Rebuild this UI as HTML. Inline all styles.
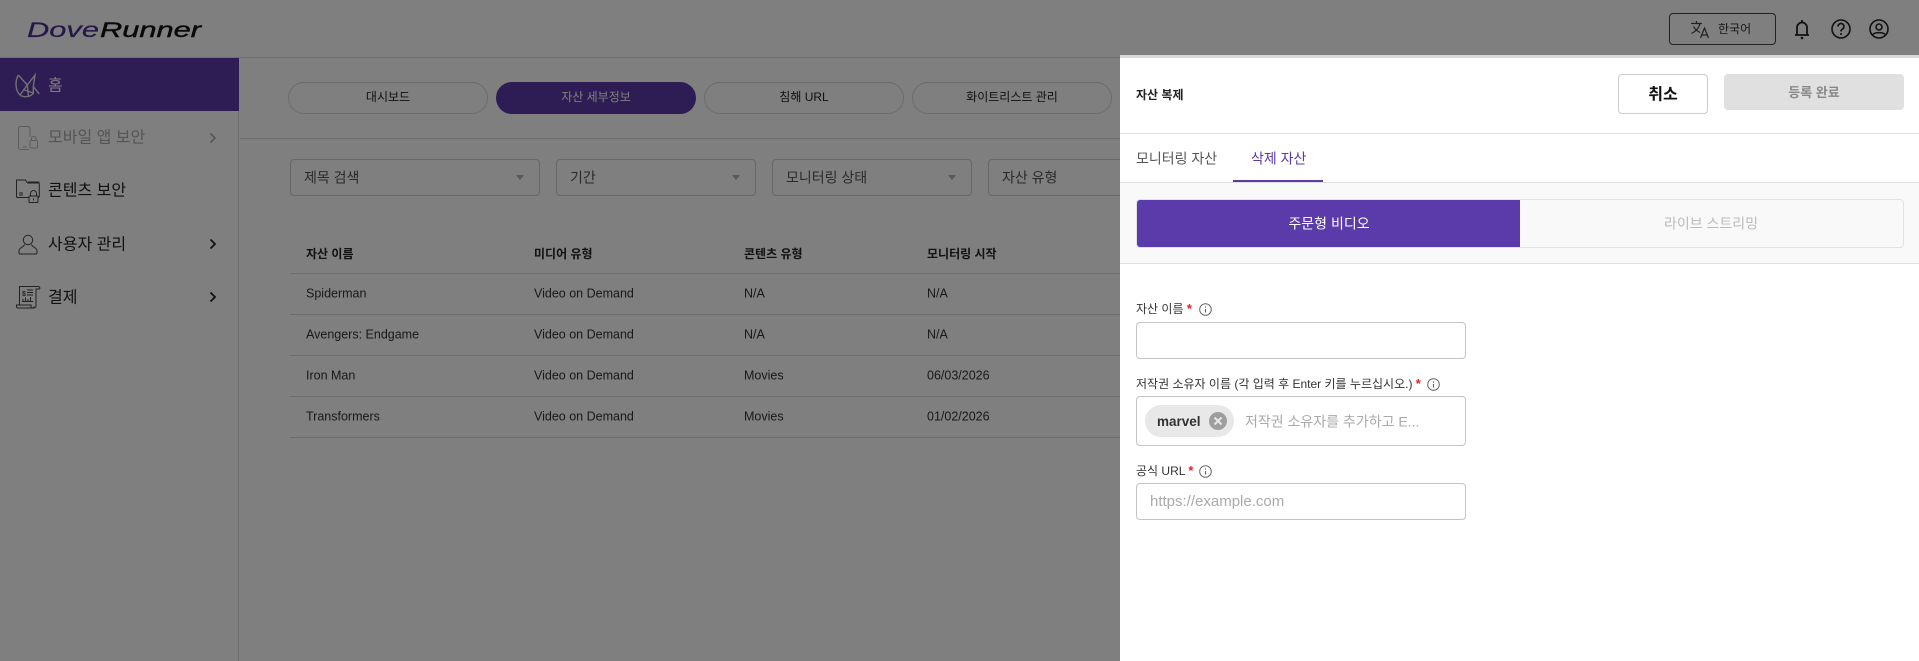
<!DOCTYPE html>
<html lang="ko"><head><meta charset="utf-8"><title>DoveRunner</title>
<style>
*{box-sizing:border-box}
html,body{margin:0;padding:0;width:1919px;height:661px;overflow:hidden;background:#fff;font-family:"Liberation Sans","Noto Sans CJK KR",sans-serif;color:#222}
#a{position:relative;width:1919px;height:661px;overflow:hidden}
.b{position:absolute}
.t{position:absolute;white-space:nowrap;transform:translateY(-50%);line-height:1.2}
.c{position:absolute;white-space:nowrap;transform:translate(-50%,-50%);line-height:1.2}
.pill{position:absolute;top:82px;width:200px;height:32px;border:1px solid #d8d8d8;border-radius:16px}
.sel{position:absolute;top:159px;height:37px;border:1px solid #cfcfcf;border-radius:4px}
.car{position:absolute;top:175px;width:0;height:0;border-left:4.500px solid transparent;border-right:4.500px solid transparent;border-top:5px solid #b0b0b0}
.ln{position:absolute;left:290px;width:830px;height:1px;background:#ddd}
.th{font-size:12px;font-weight:bold;color:#222}
.td{font-size:12.500px;color:#333}
.nav{font-size:16px;color:#222}
.inp{position:absolute;left:1136px;width:330px;border:1px solid #c4c4c4;border-radius:4px;background:#fff}
.lb{font-size:12px;color:#333}
.st{color:#e0202c;font-weight:bold;font-size:13px}
svg{position:absolute;overflow:visible}
</style></head><body><div id="a">

<!-- base page -->
<div class="b" style="left:0;top:57px;width:1919px;height:1px;background:#ddd"></div>
<svg style="left:24px;top:18px" width="180" height="26" viewBox="0 0 180 26"><text x="3" y="19" font-family="Liberation Sans" font-style="italic" font-size="21" fill="#4a2f90" stroke="#4a2f90" stroke-width=".2" textLength="72" lengthAdjust="spacingAndGlyphs">Dove</text><text x="76" y="19" font-family="Liberation Sans" font-style="italic" font-size="21" fill="#111" stroke="#111" stroke-width=".4" textLength="101" lengthAdjust="spacingAndGlyphs">Runner</text></svg>

<div class="b" style="left:0;top:58px;width:239px;height:603px;border-right:1px solid #ddd"></div>
<div class="b" style="left:0;top:58px;width:239px;height:53px;background:#5b3aa9"></div>
<svg style="left:15px;top:72px" width="26" height="26" viewBox="0 0 26 26" fill="none" stroke="#e2e2e2" stroke-width="1.400"><path d="M3.300 3 12.300 13 20 3 18.300 14.700 24.300 22"/><path d="M3.300 3C0 9 0 18 5 23C8 25.500 15 25.500 18.300 21.300L18.300 14.700"/><path d="M12.300 13 5 23M12.300 13 13.500 24.700M8 17.500 18.300 21"/></svg>
<div class="t nav" style="left:48px;top:86px;color:#fff">홈</div>

<svg style="left:17px;top:126px" width="22" height="25" viewBox="0 0 22 25" fill="none" stroke="#bbb" stroke-width="1"><path d="M12 23.500H3.500a2 2 0 0 1-2-2V2.500a2 2 0 0 1 2-2H11a2 2 0 0 1 2 2V11"/><path d="M6 21h4"/><rect x="13" y="14.500" width="7.500" height="7.500" rx="1.500"/><path d="M14.500 14.500v-2a2.300 2.300 0 0 1 4.600 0v2"/></svg>
<div class="t nav" style="left:48px;top:138px;color:#aaa">모바일 앱 보안</div>
<svg style="left:209px;top:132px" width="8" height="12" viewBox="0 0 8 12" fill="none" stroke="#aaa" stroke-width="1.600"><path d="M1.500 1.500 6 6l-4.500 4.500"/></svg>

<svg style="left:16px;top:179px" width="24" height="24" viewBox="0 0 24 24" fill="none" stroke="#444" stroke-width="1"><path d="M13 18.500H1.500a1 1 0 0 1-1-1V1h9l2 3h11a.8.8 0 0 1 .8.8V17a1.500 1.500 0 0 1-1.500 1.500H23"/><path d="M12 3h11.500"/><path d="M3 14h4M3 16h4"/><rect x="13" y="17" width="9" height="6.500" rx=".8"/><path d="M14.500 17v-2.500a3 3 0 0 1 6 0V17"/><path d="M17.500 19.500v2"/></svg>
<div class="t nav" style="left:48px;top:191px">콘텐츠 보안</div>

<svg style="left:18px;top:234px" width="20" height="21" viewBox="0 0 20 21" fill="none" stroke="#444" stroke-width="1"><circle cx="10" cy="6" r="4.700"/><path d="M6.500 10.500C6 13 1 13.500 1 17v2a1 1 0 0 0 1 1h16a1 1 0 0 0 1-1v-2c0-3.500-5-4-5.500-6.500"/></svg>
<div class="t nav" style="left:48px;top:245px">사용자 관리</div>
<svg style="left:209px;top:238px" width="8" height="12" viewBox="0 0 8 12" fill="none" stroke="#222" stroke-width="1.800"><path d="M1.500 1.500 6 6l-4.500 4.500"/></svg>

<svg style="left:16px;top:285px" width="24" height="24" viewBox="0 0 24 24" fill="none" stroke="#444" stroke-width="1"><path d="M20 3.500V21a2 2 0 0 1-2 2H2a1.500 1.500 0 0 1-1.500-1.500V20H15v1.500a1.500 1.500 0 0 0 3 0"/><path d="M3.500 20V1.500h19a1.500 1.500 0 0 1 1 2.500H20"/><path d="M11 5h6M11 7.500h6M11 10h6M6 16.500h11M7 16v-2M9.500 16v-3.500M12 16v-2M14.500 16v-4"/></svg>
<div class="b" style="left:22px;top:291px;font-size:7px;color:#444;line-height:8px;font-weight:bold">$</div>
<div class="t nav" style="left:48px;top:298px">결제</div>
<svg style="left:209px;top:291px" width="8" height="12" viewBox="0 0 8 12" fill="none" stroke="#222" stroke-width="1.800"><path d="M1.500 1.500 6 6l-4.500 4.500"/></svg>

<div class="pill" style="left:288px"></div><div class="c" style="left:388px;top:97px;font-size:12px">대시보드</div>
<div class="pill" style="left:496px;background:#5b3aa9;border-color:#5b3aa9"></div><div class="c" style="left:596px;top:97px;font-size:12px;color:#fff">자산 세부정보</div>
<div class="pill" style="left:704px"></div><div class="c" style="left:804px;top:97px;font-size:12px">침해 URL</div>
<div class="pill" style="left:912px"></div><div class="c" style="left:1012px;top:97px;font-size:12px">화이트리스트 관리</div>
<div class="b" style="left:240px;top:138px;width:880px;height:1px;background:#ddd"></div>

<div class="sel" style="left:290px;width:250px"></div><div class="t" style="left:304px;top:178px;font-size:14px;color:#555">제목 검색</div><div class="car" style="left:516px"></div>
<div class="sel" style="left:556px;width:200px"></div><div class="t" style="left:570px;top:178px;font-size:14px;color:#555">기간</div><div class="car" style="left:732px"></div>
<div class="sel" style="left:772px;width:200px"></div><div class="t" style="left:786px;top:178px;font-size:14px;color:#555">모니터링 상태</div><div class="car" style="left:948px"></div>
<div class="sel" style="left:988px;width:200px"></div><div class="t" style="left:1002px;top:178px;font-size:14px;color:#555">자산 유형</div>

<div class="t th" style="left:306px;top:254px">자산 이름</div><div class="t th" style="left:534px;top:254px">미디어 유형</div><div class="t th" style="left:744px;top:254px">콘텐츠 유형</div><div class="t th" style="left:927px;top:254px">모니터링 시작</div>
<div class="ln" style="top:273px"></div><div class="ln" style="top:314px"></div><div class="ln" style="top:355px"></div><div class="ln" style="top:396px"></div><div class="ln" style="top:437px"></div>

<div class="t td" style="left:306px;top:294px">Spiderman</div><div class="t td" style="left:534px;top:294px">Video on Demand</div><div class="t td" style="left:744px;top:294px">N/A</div><div class="t td" style="left:927px;top:294px">N/A</div>
<div class="t td" style="left:306px;top:335px">Avengers: Endgame</div><div class="t td" style="left:534px;top:335px">Video on Demand</div><div class="t td" style="left:744px;top:335px">N/A</div><div class="t td" style="left:927px;top:335px">N/A</div>
<div class="t td" style="left:306px;top:376px">Iron Man</div><div class="t td" style="left:534px;top:376px">Video on Demand</div><div class="t td" style="left:744px;top:376px">Movies</div><div class="t td" style="left:927px;top:376px">06/03/2026</div>
<div class="t td" style="left:306px;top:417px">Transformers</div><div class="t td" style="left:534px;top:417px">Video on Demand</div><div class="t td" style="left:744px;top:417px">Movies</div><div class="t td" style="left:927px;top:417px">01/02/2026</div>

<!-- top right -->
<div class="b" style="left:1669px;top:13px;width:107px;height:32px;border:1px solid #444;border-radius:4px"></div>
<svg style="left:1690px;top:20px" width="20" height="19" viewBox="0 0 20 19" fill="none" stroke="#444" stroke-width="1.200"><path d="M1 3.500h11M6.500 1v2.500M10 3.500C9 8 5.500 11.500 1.500 13.500M3.500 6.500C5 9.500 8 11.500 10 12.500"/><path d="M10.500 18 14.500 8l4 10M12 15h5"/></svg>
<div class="t" style="left:1718px;top:29px;font-size:12px;color:#333">한국어</div>
<svg style="left:1792px;top:18px" width="20" height="22" viewBox="0 0 20 22" fill="none" stroke="#222" stroke-width="1.800"><path d="M5 16.500V9.500a5 5 0 0 1 10 0v7M3 17h14"/><path d="M10 2v2"/><circle cx="10" cy="20" r="1.300" fill="#222" stroke="none"/></svg>
<svg style="left:1831px;top:19px" width="20" height="20" viewBox="0 0 20 20" fill="none" stroke="#222" stroke-width="1.600"><circle cx="10" cy="10" r="9"/><path d="M7 7.500a3 3 0 1 1 4.500 2.600c-1 .6-1.500 1-1.500 2.400"/><circle cx="10" cy="15" r="1" fill="#222" stroke="none"/></svg>
<svg style="left:1869px;top:19px" width="20" height="20" viewBox="0 0 20 20" fill="none" stroke="#222" stroke-width="1.600"><circle cx="10" cy="10" r="9"/><circle cx="10" cy="8" r="3"/><path d="M4 15.500c1.500-2.500 10.500-2.500 12 0"/></svg>

<!-- overlay -->
<div class="b" style="left:0;top:0;width:1919px;height:661px;background:rgba(0,0,0,.5)"></div>

<!-- panel -->
<div class="b" style="left:1120px;top:55px;width:799px;height:606px;background:#fff;border-top:3px solid #d8d8d8"></div>
<div class="t" style="left:1136px;top:95px;font-size:12px;font-weight:bold;color:#222">자산 복제</div>
<div class="b" style="left:1618px;top:74px;width:90px;height:40px;background:#fff;border:1px solid #ccc;border-radius:4px"></div>
<div class="c" style="left:1663px;top:95px;font-size:16px;font-weight:bold;color:#111">취소</div>
<div class="b" style="left:1724px;top:74px;width:180px;height:36px;background:#e0e0e0;border-radius:4px"></div>
<div class="c" style="left:1814px;top:93px;font-size:13px;font-weight:bold;color:#888">등록 완료</div>
<div class="b" style="left:1120px;top:133px;width:799px;height:1px;background:#ddd"></div>

<div class="t" style="left:1136px;top:159px;font-size:14px;color:#555">모니터링 자산</div>
<div class="t" style="left:1251px;top:159px;font-size:14px;color:#5b3aa9">삭제 자산</div>
<div class="b" style="left:1120px;top:182px;width:799px;height:82px;background:#f9f9f9;border-top:1px solid #ddd;border-bottom:1px solid #ddd"></div>
<div class="b" style="left:1233px;top:180px;width:90px;height:2px;background:#5b3aa9"></div>

<div class="b" style="left:1136px;top:199px;width:768px;height:49px;background:#f9f9f9;border:1px solid #e2e2e2;border-radius:4px"></div>
<div class="b" style="left:1137px;top:200px;width:383px;height:47px;background:#5b3aa9;border-radius:3px 0 0 3px"></div>
<div class="c" style="left:1329px;top:224px;font-size:14px;color:#fff">주문형 비디오</div>
<div class="c" style="left:1711px;top:224px;font-size:14px;color:#bbb">라이브 스트리밍</div>

<div class="t lb" style="left:1136px;top:309px">자산 이름 <span class="st">*</span></div>
<svg style="left:1199px;top:303px" width="13" height="13" viewBox="0 0 13 13" fill="none" stroke="#666"><circle cx="6.500" cy="6.500" r="5.800"/><path d="M6.500 6v3.500M6.500 3.500v1.200" stroke-width="1.200"/></svg>
<div class="inp" style="top:322px;height:37px"></div>

<div class="t lb" style="left:1136px;top:384px">저작권 소유자 이름 (각 입력 후 Enter 키를 누르십시오.) <span class="st">*</span></div>
<svg style="left:1427px;top:378px" width="13" height="13" viewBox="0 0 13 13" fill="none" stroke="#666"><circle cx="6.500" cy="6.500" r="5.800"/><path d="M6.500 6v3.500M6.500 3.500v1.200" stroke-width="1.200"/></svg>
<div class="inp" style="top:396px;height:50px"></div>
<div class="b" style="left:1145px;top:405px;width:89px;height:32px;background:#e8e8e8;border-radius:16px"></div>
<div class="t" style="left:1157px;top:422px;font-size:13.500px;font-weight:bold;color:#333">marvel</div>
<svg style="left:1209px;top:412px" width="18" height="18" viewBox="0 0 18 18"><circle cx="9" cy="9" r="9" fill="#9e9e9e"/><path d="M5.500 5.500l7 7M12.500 5.500l-7 7" stroke="#e8e8e8" stroke-width="2"/></svg>
<div class="t" style="left:1245px;top:422px;font-size:14px;color:#aaa">저작권 소유자를 추가하고 E...</div>

<div class="t lb" style="left:1136px;top:471px">공식 URL <span class="st">*</span></div>
<svg style="left:1199px;top:465px" width="13" height="13" viewBox="0 0 13 13" fill="none" stroke="#666"><circle cx="6.500" cy="6.500" r="5.800"/><path d="M6.500 6v3.500M6.500 3.500v1.200" stroke-width="1.200"/></svg>
<div class="inp" style="top:483px;height:37px"></div>
<div class="t" style="left:1150px;top:502px;font-size:15px;color:#aaa">https://example.com</div>

</div></body></html>
